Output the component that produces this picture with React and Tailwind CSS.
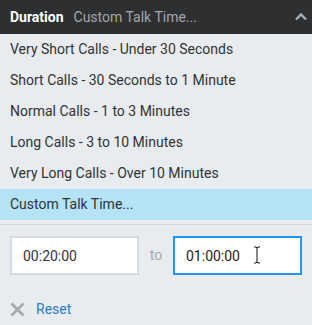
import React, { useState } from 'react';

const options = [
  'Very Short Calls - Under 30 Seconds',
  'Short Calls - 30 Seconds to 1 Minute',
  'Normal Calls - 1 to 3 Minutes',
  'Long Calls - 3 to 10 Minutes',
  'Very Long Calls - Over 10 Minutes',
  'Custom Talk Time...',
];

const App = () => {
  const [selected, setSelected] = useState(5);
  const [from, setFrom] = useState('00:20:00');
  const [to, setTo] = useState('01:00:00');

  return (
    <div className="w-[312px] h-[325px] bg-[#e8ecef] text-[14px] font-['Roboto',sans-serif]">
      <div className="h-[34px] bg-[#2e2f31] flex items-center px-[10px]">
        <span className="font-bold text-white">Duration</span>
        <span className="ml-[10px] text-[#a3a7ab]">{options[selected]}</span>
        <svg className="ml-auto mr-[-6px]" width="14" height="10" viewBox="0 0 14 10">
          <path d="M2 7.5 L7 2.5 L12 7.5" fill="none" stroke="#a9adb1" strokeWidth="2.4" />
        </svg>
      </div>

      <div>
        {options.map((opt, i) => (
          <div
            key={opt}
            onClick={() => setSelected(i)}
            className={`h-[31px] flex items-center px-[10px] cursor-pointer text-[#2f3337] ${
              i === selected ? 'bg-[#b4e3f5]' : ''
            }`}
          >
            {opt}
          </div>
        ))}
      </div>

      <div className="mt-[4px] border-t border-[#d3d9de] pt-[11px] px-[10px]">
        <div className="flex items-center">
          <input
            value={from}
            onChange={(e) => setFrom(e.target.value)}
            className="w-[129px] h-[39px] bg-white border-2 border-[#d4dadf] px-[11px] text-[#333] outline-none"
          />
          <span className="w-[34px] text-center text-[#a3aab0]">to</span>
          <div className="relative">
            <input
              value={to}
              onChange={(e) => setTo(e.target.value)}
              className="w-[129px] h-[39px] bg-white border-2 border-[#2196f3] px-[11px] text-[#222] outline-none"
            />
            <svg className="absolute left-[80px] top-[10px]" width="8" height="18" viewBox="0 0 8 18">
              <path d="M1 1 H3 M5 1 H7 M4 1.5 V16.5 M1 17 H3 M5 17 H7 M3 1.5 H5 M3 16.5 H5" stroke="#111" strokeWidth="1" fill="none" />
            </svg>
          </div>
        </div>

        <div className="flex items-center mt-[24px]">
          <svg width="15" height="15" viewBox="0 0 15 15">
            <path d="M1.5 1.5 L13.5 13.5 M13.5 1.5 L1.5 13.5" stroke="#a6aaae" strokeWidth="2.8" />
          </svg>
          <button className="ml-[11px] text-[#2c7cc0]">Reset</button>
        </div>
      </div>
    </div>
  );
};

export default App;
